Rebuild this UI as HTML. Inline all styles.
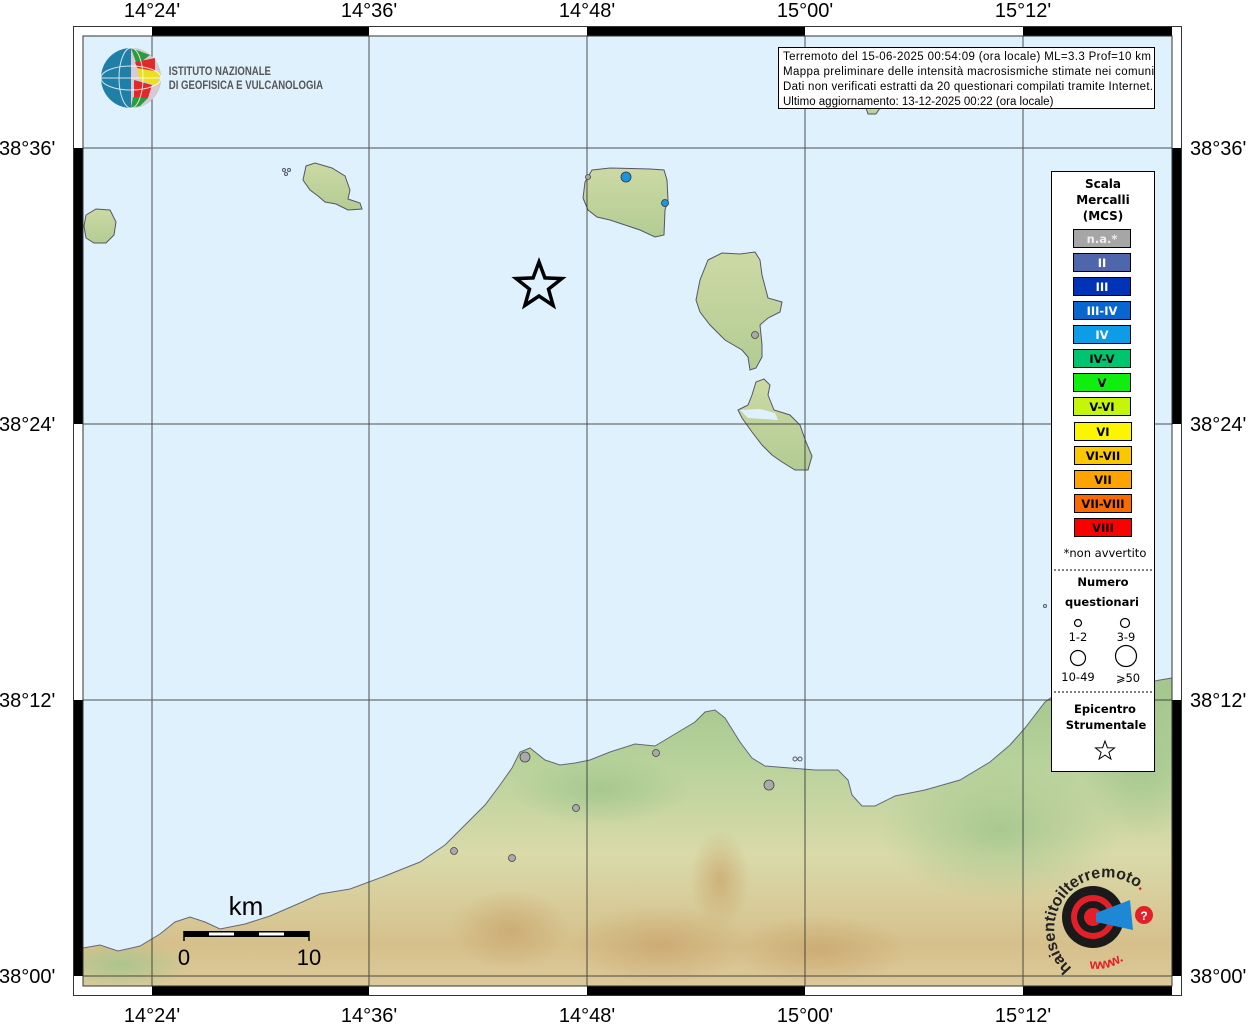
<!DOCTYPE html>
<html><head><meta charset="utf-8"><style>
html,body{margin:0;padding:0;background:#fff;}
svg{display:block;font-family:"Liberation Sans","DejaVu Sans",sans-serif;}
</style></head><body>
<svg width="1255" height="1024" viewBox="0 0 1255 1024" xmlns="http://www.w3.org/2000/svg">
<defs>
<linearGradient id="lg" gradientUnits="userSpaceOnUse" x1="0" y1="690" x2="0" y2="990">
<stop offset="0" stop-color="#a4c78e"/>
<stop offset="0.25" stop-color="#b9d29c"/>
<stop offset="0.55" stop-color="#d9daa9"/>
<stop offset="0.85" stop-color="#d6c08c"/>
<stop offset="1" stop-color="#ddcb9c"/>
</linearGradient>
<radialGradient id="br" cx="0.5" cy="0.5" r="0.5">
<stop offset="0" stop-color="#c9a36a" stop-opacity="0.7"/><stop offset="1" stop-color="#c9a36a" stop-opacity="0"/>
</radialGradient>
<radialGradient id="gr" cx="0.5" cy="0.5" r="0.5">
<stop offset="0" stop-color="#9fc58c" stop-opacity="0.8"/><stop offset="1" stop-color="#9fc58c" stop-opacity="0"/>
</radialGradient>
<linearGradient id="il" x1="0" y1="0" x2="0" y2="1">
<stop offset="0" stop-color="#cdd9a4"/><stop offset="1" stop-color="#b3cc94"/>
</linearGradient>
<clipPath id="landclip"><path id="sic" d="M83,948 L100,945 L118,951 L140,946 L160,934 L175,922 L190,917 L205,922 L220,929 L245,924 L270,916 L300,903 L320,894 L350,889 L385,876 L420,862 L445,845 L465,825 L485,805 L500,785 L512,768 L520,752 L530,748 L545,760 L560,765 L575,763 L590,760 L610,752 L635,744 L655,746 L675,734 L695,722 L705,712 L715,710 L725,718 L740,742 L752,758 L765,766 L790,768 L815,770 L838,770 L848,780 L852,795 L862,806 L875,806 L895,796 L925,790 L960,780 L990,762 L1010,745 L1025,728 L1045,702 L1062,690 L1080,686 L1100,690 L1130,686 L1160,680 L1172,678 L1172,986 L83,986 Z"/></clipPath>
</defs>
<rect width="1255" height="1024" fill="#fff"/>
<rect x="83" y="36" width="1089" height="950" fill="#dff1fd"/>
<use href="#sic" fill="url(#lg)"/>
<g clip-path="url(#landclip)">
<ellipse cx="510" cy="930" rx="60" ry="40" fill="url(#br)"/>
<ellipse cx="660" cy="945" rx="90" ry="40" fill="url(#br)"/>
<ellipse cx="820" cy="950" rx="90" ry="35" fill="url(#br)"/>
<ellipse cx="720" cy="880" rx="30" ry="50" fill="url(#br)"/>
<ellipse cx="1000" cy="830" rx="120" ry="70" fill="url(#gr)"/>
<ellipse cx="1140" cy="760" rx="60" ry="80" fill="url(#gr)"/>
<ellipse cx="120" cy="965" rx="70" ry="25" fill="url(#gr)"/>
<ellipse cx="600" cy="790" rx="90" ry="35" fill="url(#gr)"/>
</g>
<use href="#sic" fill="none" stroke="#667" stroke-width="1"/>
<!-- Islands -->
<path d="M86,215 L96,209 L110,210 L116,222 L114,235 L106,243 L94,243 L86,238 L84,226 Z" fill="url(#il)" stroke="#556" stroke-width="1"/>
<path d="M306,166 L315,163 L332,168 L345,176 L350,190 L348,199 L360,203 L362,209 L348,210 L336,204 L325,202 L318,196 L310,190 L303,180 Z" fill="url(#il)" stroke="#556" stroke-width="1"/>
<circle cx="284" cy="170" r="1.5" fill="none" stroke="#556"/><circle cx="289" cy="170" r="1.5" fill="none" stroke="#556"/><circle cx="286" cy="174" r="1.5" fill="none" stroke="#556"/>
<path d="M592,170 L610,168 L650,169 L664,170 L667,180 L668,200 L665,210 L664,235 L655,237 L640,230 L625,225 L610,220 L597,217 L588,210 L583,198 L585,182 Z" fill="url(#il)" stroke="#556" stroke-width="1"/>
<path d="M708,260 L722,253 L740,254 L755,252 L760,260 L762,275 L768,298 L782,302 L780,312 L768,318 L760,325 L762,345 L762,357 L756,368 L750,370 L748,357 L742,350 L725,340 L710,325 L700,312 L696,300 L700,280 Z" fill="url(#il)" stroke="#556" stroke-width="1"/>
<path d="M756,382 L764,379 L770,385 L768,395 L774,410 L790,415 L800,425 L806,442 L812,456 L808,470 L795,470 L782,462 L772,455 L762,445 L752,432 L742,418 L738,410 L748,405 L752,395 Z" fill="url(#il)" stroke="#556" stroke-width="1"/>
<path d="M740,410 L760,409 L775,413 L778,420 L748,418 Z" fill="#dff1fd"/>
<path d="M866,108 L880,108 L876,114 L868,114 Z" fill="url(#il)" stroke="#556" stroke-width="1"/>
<circle cx="1045" cy="606" r="1.5" fill="none" stroke="#556"/>
<circle cx="795" cy="759" r="2" fill="none" stroke="#556"/><circle cx="800" cy="759" r="2" fill="none" stroke="#556"/>
<!-- grid -->
<g stroke="#333" stroke-width="1" fill="none" opacity="0.85">
<line x1="152" y1="36" x2="152" y2="986"/><line x1="369" y1="36" x2="369" y2="986"/>
<line x1="587" y1="36" x2="587" y2="986"/><line x1="805" y1="36" x2="805" y2="986"/>
<line x1="1023" y1="36" x2="1023" y2="986"/>
<line x1="83" y1="148" x2="1172" y2="148"/><line x1="83" y1="424" x2="1172" y2="424"/>
<line x1="83" y1="700" x2="1172" y2="700"/><line x1="83" y1="976" x2="1172" y2="976"/>
</g>
<g fill="#000">
<rect x="152" y="26" width="217" height="10"/><rect x="587" y="26" width="218" height="10"/><rect x="1023" y="26" width="149" height="10"/>
<rect x="152" y="986" width="217" height="10"/><rect x="587" y="986" width="218" height="10"/><rect x="1023" y="986" width="149" height="10"/>
<rect x="73" y="148" width="10" height="276"/><rect x="73" y="700" width="10" height="276"/>
<rect x="1172" y="148" width="10" height="276"/><rect x="1172" y="700" width="10" height="276"/>
</g>
<rect x="73.5" y="26.5" width="1108" height="969" fill="none" stroke="#333"/>
<rect x="83" y="36" width="1089" height="950" fill="none" stroke="#333"/>
<g font-size="20" fill="#000" text-anchor="middle">
<text x="152" y="17">14°24'</text><text x="369" y="17">14°36'</text><text x="587" y="17">14°48'</text><text x="805" y="17">15°00'</text><text x="1023" y="17">15°12'</text>
<text x="152" y="1022">14°24'</text><text x="369" y="1022">14°36'</text><text x="587" y="1022">14°48'</text><text x="805" y="1022">15°00'</text><text x="1023" y="1022">15°12'</text>
</g>
<g font-size="20" fill="#000">
<text x="-1" y="155">38°36'</text><text x="-1" y="431">38°24'</text><text x="-1" y="707">38°12'</text><text x="-1" y="983">38°00'</text>
<text x="1190" y="155">38°36'</text><text x="1190" y="431">38°24'</text><text x="1190" y="707">38°12'</text><text x="1190" y="983">38°00'</text>
</g>
<!-- INGV logo -->
<circle cx="131" cy="78" r="30" fill="#1f7fa6"/>
<path d="M131,48 A30,30 0 0 1 161,78 A30,30 0 0 1 131,108 Z" fill="#d8c9d4"/>
<path d="M131,48 L150,55 L137,65 Z" fill="#2c9a3e"/>
<path d="M135,62 L155,58 L155,72 L138,70 Z" fill="#e02a2a"/>
<path d="M137,68 L160,72 L158,86 L140,80 Z" fill="#e8e020"/>
<path d="M134,80 L152,85 L148,98 L134,98 Z" fill="#e02a2a"/>
<path d="M133,97 L148,98 L140,106 L131,108 Z" fill="#2c9a3e"/>
<g stroke="#fff" stroke-width="1" fill="none" opacity="0.8">
<ellipse cx="131" cy="78" rx="12" ry="30"/><ellipse cx="131" cy="78" rx="30" ry="12"/><line x1="101" y1="78" x2="161" y2="78"/>
</g>
<g font-size="12" fill="#555" font-weight="bold" transform="scale(0.8,1)">
<text x="211" y="75">ISTITUTO NAZIONALE</text><text x="211" y="89">DI GEOFISICA E VULCANOLOGIA</text>
</g>
<!-- info box -->
<rect x="778.5" y="47.5" width="376" height="61" fill="#fff" stroke="#000"/>
<g font-size="11.5" fill="#000">
<text x="783" y="60" textLength="368">Terremoto del 15-06-2025 00:54:09 (ora locale) ML=3.3 Prof=10 km</text>
<text x="783" y="75" textLength="371">Mappa preliminare delle intensità macrosismiche stimate nei comuni</text>
<text x="783" y="90" textLength="370">Dati non verificati estratti da 20 questionari compilati tramite Internet.</text>
<text x="783" y="105">Ultimo aggiornamento: 13-12-2025 00:22 (ora locale)</text>
</g>
<circle cx="626" cy="177" r="5" fill="#1a95e0" stroke="#333" stroke-width="0.8"/>
<circle cx="665" cy="203" r="3.5" fill="#1a95e0" stroke="#333" stroke-width="0.8"/>
<circle cx="588" cy="177" r="2.5" fill="#aaa" stroke="#444" stroke-width="0.8"/>
<circle cx="755" cy="335" r="3.5" fill="#aaa" stroke="#444" stroke-width="0.8"/>
<circle cx="525" cy="757" r="5" fill="#aaa" stroke="#444" stroke-width="0.8"/>
<circle cx="656" cy="753" r="3.5" fill="#aaa" stroke="#444" stroke-width="0.8"/>
<circle cx="769" cy="785" r="5" fill="#aaa" stroke="#444" stroke-width="0.8"/>
<circle cx="576" cy="808" r="3.5" fill="#aaa" stroke="#444" stroke-width="0.8"/>
<circle cx="454" cy="851" r="3.5" fill="#aaa" stroke="#444" stroke-width="0.8"/>
<circle cx="512" cy="858" r="3.5" fill="#aaa" stroke="#444" stroke-width="0.8"/>
<polygon points="539,262 544.9,277.9 561.8,278.6 548.5,289.1 553.1,305.4 539,296 524.9,305.4 529.5,289.1 516.2,278.6 533.1,277.9" fill="none" stroke="#000" stroke-width="3.5"/>
<!-- legend -->
<rect x="1051.5" y="171.5" width="103" height="600" fill="#fff" stroke="#000"/>
<g font-family="'DejaVu Sans',sans-serif" font-size="12" font-weight="bold" text-anchor="middle" fill="#000">
<text x="1103" y="188">Scala</text><text x="1103" y="204">Mercalli</text><text x="1103" y="220">(MCS)</text>
</g>
<g font-family="'DejaVu Sans',sans-serif" font-size="11.5" font-weight="bold" text-anchor="middle" stroke="#000" stroke-width="1">
<rect x="1073.5" y="229.5" width="57" height="18" fill="#a6a6a6"/><text x="1102" y="243" fill="#eee" stroke="none">n.a.*</text>
<rect x="1073.5" y="253.5" width="57" height="18" fill="#4e66ab"/><text x="1102" y="267" fill="#fff" stroke="none">II</text>
<rect x="1073.5" y="277.5" width="57" height="18" fill="#0033b5"/><text x="1102" y="291" fill="#fff" stroke="none">III</text>
<rect x="1073.5" y="301.5" width="57" height="18" fill="#0a66cf"/><text x="1102" y="315" fill="#fff" stroke="none">III-IV</text>
<rect x="1073.5" y="325.5" width="57" height="18" fill="#0c9ce8"/><text x="1102" y="339" fill="#fff" stroke="none">IV</text>
<rect x="1073.5" y="349.5" width="57" height="18" fill="#00c470"/><text x="1102" y="363" fill="#000" stroke="none">IV-V</text>
<rect x="1073.5" y="373.5" width="57" height="18" fill="#10ee10"/><text x="1102" y="387" fill="#000" stroke="none">V</text>
<rect x="1073.5" y="397.5" width="57" height="18" fill="#c4f50a"/><text x="1102" y="411" fill="#000" stroke="none">V-VI</text>
<rect x="1074.5" y="422.5" width="57" height="18" fill="#fbf500"/><text x="1103" y="436" fill="#000" stroke="none">VI</text>
<rect x="1074.5" y="446.5" width="57" height="18" fill="#fbc800"/><text x="1103" y="460" fill="#000" stroke="none">VI-VII</text>
<rect x="1074.5" y="470.5" width="57" height="18" fill="#fba400"/><text x="1103" y="484" fill="#000" stroke="none">VII</text>
<rect x="1074.5" y="494.5" width="57" height="18" fill="#fb6a00"/><text x="1103" y="508" fill="#000" stroke="none">VII-VIII</text>
<rect x="1074.5" y="518.5" width="57" height="18" fill="#fb0000"/><text x="1103" y="532" fill="#000" stroke="none">VIII</text>
</g>
<g font-family="'DejaVu Sans',sans-serif" font-size="11.5" text-anchor="middle" fill="#000">
<text x="1105" y="557">*non avvertito</text>
<line x1="1054" y1="570" x2="1152" y2="570" stroke="#000" stroke-dasharray="2,2"/>
<text x="1103" y="586" font-weight="bold">Numero</text><text x="1102" y="606" font-weight="bold">questionari</text>
<circle cx="1078" cy="623" r="3.5" fill="none" stroke="#000" stroke-width="1.2"/><circle cx="1125" cy="623" r="4.5" fill="none" stroke="#000" stroke-width="1.2"/>
<text x="1078" y="641">1-2</text><text x="1126" y="641">3-9</text>
<circle cx="1078" cy="658" r="7.5" fill="none" stroke="#000" stroke-width="1.2"/><circle cx="1126" cy="656" r="10.5" fill="none" stroke="#000" stroke-width="1.2"/>
<text x="1078" y="681">10-49</text><text x="1128" y="682">⩾50</text>
<line x1="1054" y1="692" x2="1152" y2="692" stroke="#000" stroke-dasharray="2,2"/>
<text x="1105" y="713" font-weight="bold">Epicentro</text><text x="1106" y="729" font-weight="bold">Strumentale</text>
<polygon points="1105,741 1107.4,747.7 1114.5,747.9 1108.9,752.3 1110.9,759.1 1105,755.1 1099.1,759.1 1101.1,752.3 1095.5,747.9 1102.6,747.7" fill="none" stroke="#000" stroke-width="1"/>
</g>
<!-- scale bar -->
<text x="246" y="915" font-size="26" text-anchor="middle" fill="#000">km</text>
<rect x="184" y="931" width="125" height="6" fill="#000"/>
<rect x="209" y="932.5" width="25" height="3" fill="#fff"/><rect x="259" y="932.5" width="25" height="3" fill="#fff"/>
<line x1="184" y1="931" x2="184" y2="941" stroke="#000" stroke-width="1.5"/><line x1="309" y1="931" x2="309" y2="941" stroke="#000" stroke-width="1.5"/>
<text x="184" y="965" font-size="22" text-anchor="middle" fill="#000">0</text>
<text x="309" y="965" font-size="22" text-anchor="middle" fill="#000">10</text>
<!-- haisentito logo -->
<circle cx="1093" cy="917" r="31" fill="#1a1a1a"/>
<circle cx="1093" cy="917" r="22" fill="#e3202a"/>
<circle cx="1093" cy="917" r="16" fill="#1a1a1a"/>
<circle cx="1093" cy="917" r="9" fill="#e3202a"/>
<path d="M1096,913 L1130,900 L1133,930 L1096,922 Z" fill="#1e88d6"/>
<circle cx="1144" cy="915" r="9" fill="#e3202a"/><text x="1144" y="920" font-size="12" font-weight="bold" fill="#fff" text-anchor="middle">?</text>
<path id="arc" d="M1072,968 A47,47 0 0 1 1140,890" fill="none"/>
<text font-size="16" font-weight="bold" fill="#222"><textPath href="#arc">haisentitoilterremoto<tspan fill="#e3202a">.it</tspan></textPath></text>
<path id="arc2" d="M1080,966 A47,47 0 0 0 1140,940" fill="none"/>
<text font-size="14" font-weight="bold" fill="#e3202a"><textPath href="#arc2" startOffset="10">www.</textPath></text>
</svg>
</body></html>
